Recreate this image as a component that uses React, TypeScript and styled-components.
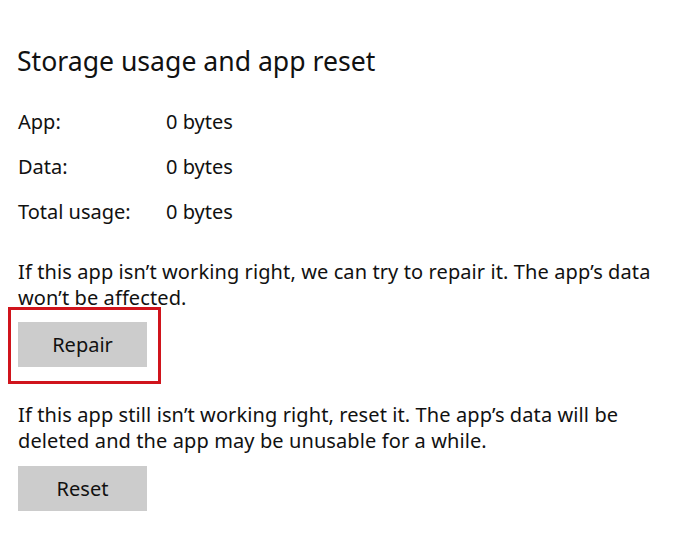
import React from 'react'
import styled, { createGlobalStyle } from 'styled-components'

const GlobalStyle = createGlobalStyle`
  body {
    margin: 0;
    background: #ffffff;
    font-family: "Noto Sans", "Open Sans", sans-serif;
    color: #111111;
  }
`

const Page = styled.div`
  display: flex;
  flex-direction: column;
  padding: 38px 0 0 18px;
`
const Title = styled.h2`
  margin: 0 0 15px -1px;
  font-size: 26.6px;
  font-weight: 400;
  line-height: 46px;
`
const UsageTable = styled.div`
  display: grid;
  grid-template-columns: 148px auto;
  grid-auto-rows: 45px;
  align-items: center;
  font-size: 20px;
  margin-bottom: 25px;
`
const Label = styled.span``
const Value = styled.span``

const Note = styled.p`
  margin: 0;
  max-width: 652px;
  font-size: 20px;
  line-height: 26px;
  letter-spacing: 0.1px;
`
const Highlight = styled.div`
  align-self: flex-start;
  margin: -4px 0 18px -10px;
  padding: 12px 11px 14px 7px;
  border: 3px solid #d0141c;
`
const Button = styled.button`
  display: block;
  width: 129px;
  height: 45px;
  border: none;
  background: #cccccc;
  font-family: inherit;
  font-size: 20px;
  color: #111111;
  padding: 0;
  cursor: pointer;
`
const ResetButton = styled(Button)`
  align-self: flex-start;
  margin-top: 12px;
`

const usage = [
  { label: 'App:', value: '0 bytes' },
  { label: 'Data:', value: '0 bytes' },
  { label: 'Total usage:', value: '0 bytes' },
]

function App() {
  return (
    <>
      <GlobalStyle />
      <Page>
        <Title>Storage usage and app reset</Title>

        <UsageTable>
          {usage.map((row) => (
            <React.Fragment key={row.label}>
              <Label>{row.label}</Label>
              <Value>{row.value}</Value>
            </React.Fragment>
          ))}
        </UsageTable>

        <Note>
          If this app isn’t working right, we can try to repair it. The app’s data won’t be
          affected.
        </Note>
        <Highlight>
          <Button>Repair</Button>
        </Highlight>

        <Note>
          If this app still isn’t working right, reset it. The app’s data will be deleted and
          the app may be unusable for a while.
        </Note>
        <ResetButton>Reset</ResetButton>
      </Page>
    </>
  )
}

export default App
